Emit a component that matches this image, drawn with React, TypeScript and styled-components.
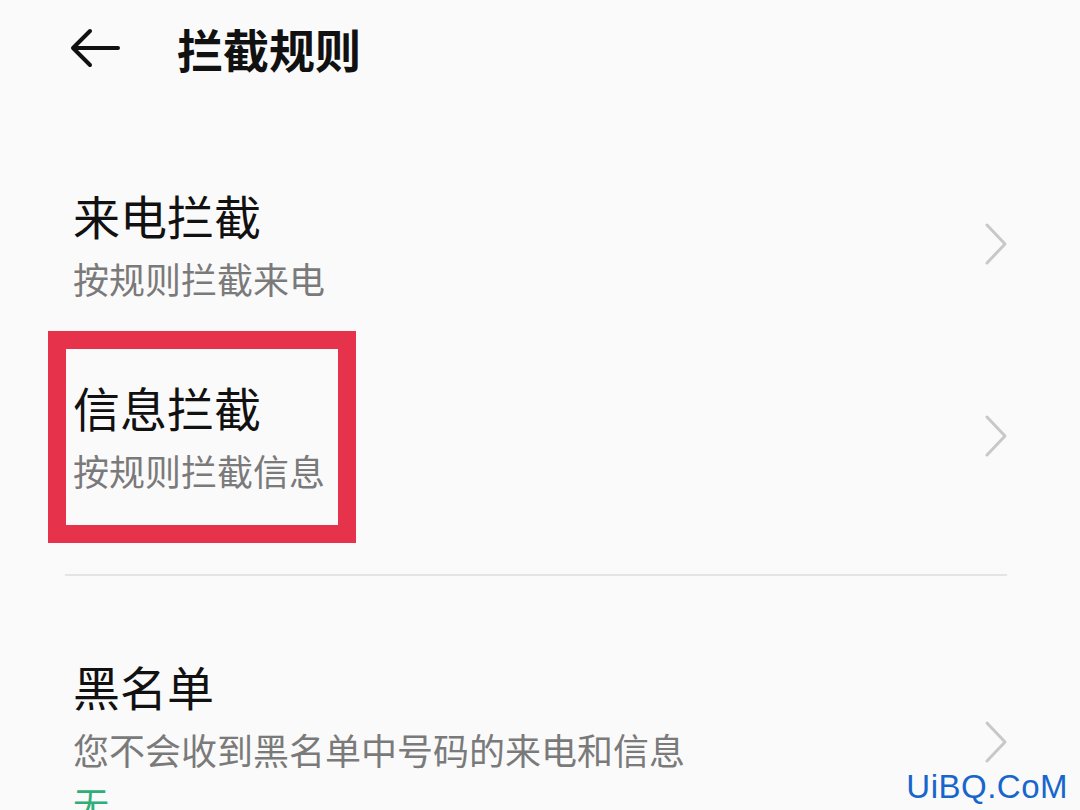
import React from "react";
import styled, { createGlobalStyle } from "styled-components";

const GlobalStyle = createGlobalStyle`
  html, body {
    margin: 0;
    padding: 0;
    background: #fafafa;
  }
  body {
    font-family: "Noto Sans CJK SC", "Noto Sans", sans-serif;
    color: #111;
  }
`;

const Page = styled.div`
  position: relative;
  width: 1080px;
  height: 810px;
  overflow: hidden;
  background: #fafafa;
`;

const Header = styled.div`
  display: flex;
  align-items: center;
  height: 96px;
  padding-left: 70px;
`;

const BackButton = styled.div`
  display: flex;
  align-items: center;
  width: 107px;
`;

const HeaderTitle = styled.h1`
  margin: 0;
  font-size: 46px;
  font-weight: 700;
  line-height: 1;
  color: #111;
`;

const List = styled.div`
  padding-top: 52px;
`;

const Row = styled.div<{ spaced?: boolean }>`
  position: relative;
  display: flex;
  align-items: center;
  padding: ${(p) => (p.spaced ? "80px" : "37px")} 73px 37px 73px;
`;

const RowText = styled.div`
  flex: 1;
  display: flex;
  flex-direction: column;
`;

const RowTitle = styled.div`
  font-size: 47px;
  line-height: 60px;
  color: #111;
`;

const RowSub = styled.div`
  margin-top: 8px;
  font-size: 36px;
  line-height: 50px;
  color: #7a7a7a;
`;

const RowValue = styled.div`
  margin-top: 4px;
  font-size: 36px;
  line-height: 50px;
  color: #2fae7a;
`;

const Chevron = styled.div`
  display: flex;
  margin-right: -2px;
`;

const Divider = styled.div`
  height: 2px;
  margin: 42px 73px 0 65px;
  background: #e4e4e4;
`;

const Highlight = styled.div`
  position: absolute;
  left: 48px;
  top: -9px;
  width: 308px;
  height: 212px;
  box-sizing: border-box;
  border: 18px solid #e6324b;
  pointer-events: none;
`;

const Watermark = styled.div`
  position: absolute;
  right: 12px;
  bottom: 4px;
  font-family: "Liberation Sans", Arial, sans-serif;
  font-size: 33px;
  color: #1766cc;
  letter-spacing: 0.5px;
`;

const ChevronIcon = () => (
  <svg width="26" height="44" viewBox="0 0 26 44">
    <polyline
      points="4,3 22,22 4,41"
      fill="none"
      stroke="#c8c8c8"
      strokeWidth="3"
      strokeLinecap="round"
      strokeLinejoin="round"
    />
  </svg>
);

const BackIcon = () => (
  <svg width="50" height="40" viewBox="0 0 50 40">
    <path
      d="M48 20 H4 M20 3 L3 20 L20 37"
      fill="none"
      stroke="#111"
      strokeWidth="4"
      strokeLinecap="round"
      strokeLinejoin="round"
    />
  </svg>
);

interface Rule {
  title: string;
  sub: string;
  value?: string;
}

const rules: Rule[] = [
  { title: "来电拦截", sub: "按规则拦截来电" },
  { title: "信息拦截", sub: "按规则拦截信息" },
];

const blacklist: Rule = {
  title: "黑名单",
  sub: "您不会收到黑名单中号码的来电和信息",
  value: "无",
};

export default function App() {
  return (
    <Page>
      <GlobalStyle />
      <Header>
        <BackButton>
          <BackIcon />
        </BackButton>
        <HeaderTitle>拦截规则</HeaderTitle>
      </Header>
      <List>
        {rules.map((r, i) => (
          <Row key={r.title}>
            <RowText>
              <RowTitle>{r.title}</RowTitle>
              <RowSub>{r.sub}</RowSub>
            </RowText>
            <Chevron>
              <ChevronIcon />
            </Chevron>
            {i === 1 && <Highlight />}
          </Row>
        ))}
        <Divider />
        <Row spaced>
          <RowText>
            <RowTitle>{blacklist.title}</RowTitle>
            <RowSub>{blacklist.sub}</RowSub>
            <RowValue>{blacklist.value}</RowValue>
          </RowText>
          <Chevron>
            <ChevronIcon />
          </Chevron>
        </Row>
      </List>
      <Watermark>UiBQ.CoM</Watermark>
    </Page>
  );
}
